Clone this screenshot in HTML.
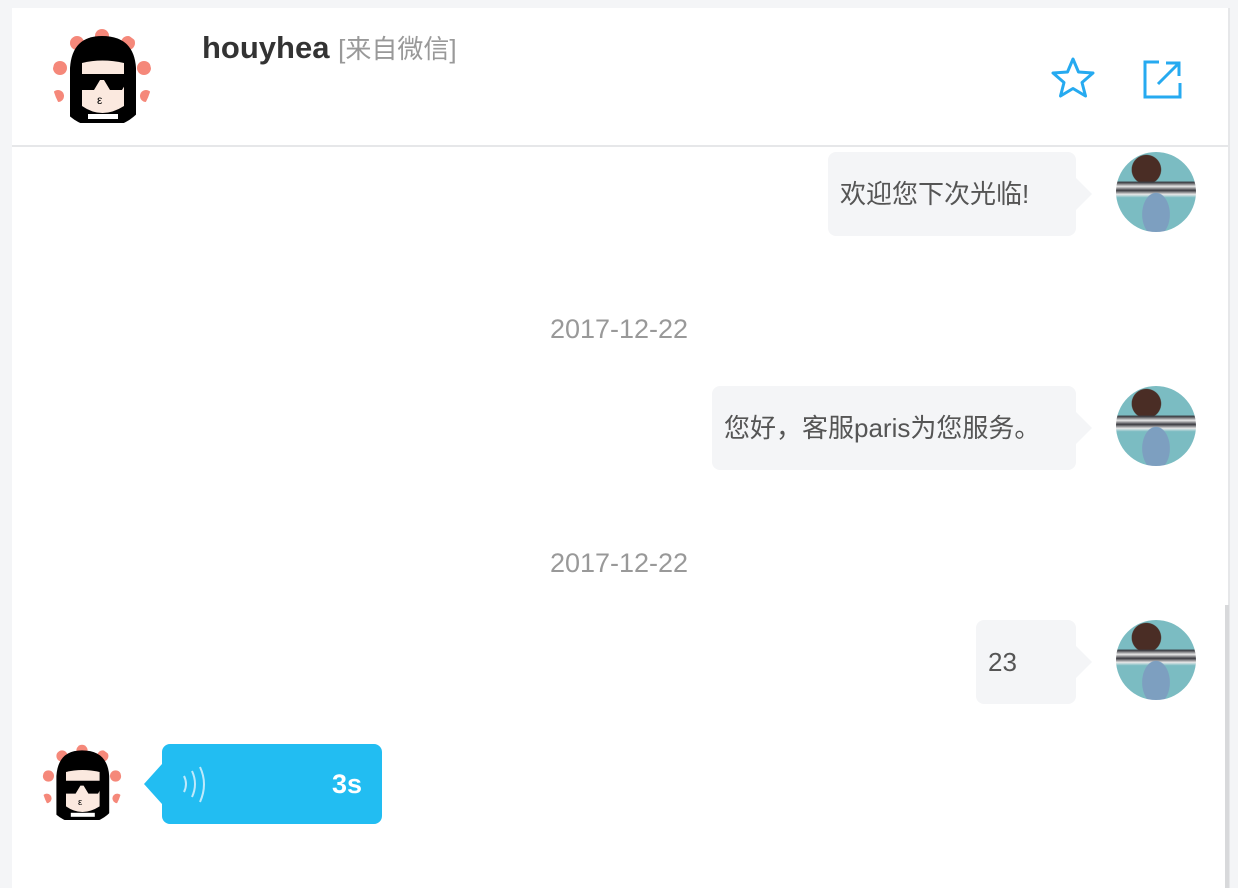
<!DOCTYPE html>
<html><head><meta charset="utf-8"><style>
*{margin:0;padding:0;box-sizing:border-box}
body{width:1238px;height:888px;background:#f4f5f7;position:relative;overflow:hidden;font-family:"Liberation Sans","Noto Sans CJK SC",sans-serif}
.panel{position:absolute;left:12px;top:8px;width:1218px;height:880px;background:#fff;border-right:2px solid #e6e7e9}
.hdr{position:absolute;left:12px;top:8px;width:1216px;height:139px;border-bottom:2px solid #e6e7e9}
.abs{position:absolute}
.bub{position:absolute;background:#f4f5f7;border-radius:8px;color:#555;font-size:26px;line-height:84px;padding:0 12px;height:84px}
.bub:after{content:"";position:absolute;right:-16px;top:26px;border:16px solid transparent;border-left-color:#f4f5f7;border-right:0}
.date{position:absolute;left:0;width:1238px;text-align:center;color:#999;font-size:27px}
.girl{position:absolute;width:80px;height:80px;border-radius:50%;background:radial-gradient(ellipse at 50% 78%,#7d9fc0 0 24%,transparent 25%),linear-gradient(180deg,transparent 36%,#3a3a40 38%,#e8e8e8 43%,#3a3a40 48%,#e8e8e8 53%,transparent 57%),radial-gradient(circle at 38% 22%,#4a2d25 0 18%,transparent 19%),#7bbcc2;overflow:hidden}
</style></head><body>
<div class="panel"></div>
<div class="hdr"></div>
<svg class="abs" style="left:52px;top:28px" width="100" height="100" viewBox="0 0 100 100">
<defs><clipPath id="c1"><circle cx="50" cy="50" r="50"/></clipPath></defs>
<g clip-path="url(#c1)"><circle cx="50" cy="50" r="50" fill="#fff"/>
<g fill="#f5887a"><circle cx="50" cy="8" r="7"/><circle cx="25" cy="15" r="7"/><circle cx="76" cy="15" r="7"/><circle cx="8" cy="40" r="7"/><circle cx="92" cy="40" r="7"/><circle cx="6" cy="68" r="6"/><circle cx="94" cy="68" r="6"/></g>
<path d="M18 95 L18 40 Q20 8 50 8 Q82 8 84 40 L84 95 Z" fill="#000"/>
<path d="M30 35 Q50 30 72 35 L72 78 Q50 92 30 78Z" fill="#fbe9df"/>
<path d="M26 46 H76 V52 L70 62 H58 L52 52 H48 L42 62 H30 L26 52Z" fill="#000"/>
<text x="45" y="76" font-size="12" fill="#000">ε</text>
<rect x="36" y="86" width="30" height="5" fill="#fff"/></g></svg>
<div class="abs" style="left:202px;top:29px;font-size:31px;font-weight:bold;color:#333">houyhea <span style="font-weight:normal;color:#999;font-size:26px">[来自微信]</span></div>
<svg class="abs" style="left:1049px;top:56px" width="48" height="44" viewBox="0 0 48 44"><path d="M24 3 L29.5 16 L44 17 L33 26.5 L36.5 40 L24 32.5 L11.5 40 L15 26.5 L4 17 L18.5 16 Z" fill="none" stroke="#26aaf0" stroke-width="3" stroke-linejoin="round"/></svg>
<svg class="abs" style="left:1142px;top:60px" width="40" height="40" viewBox="0 0 40 40"><path d="M17 2 H3 V37 H38 V23" fill="none" stroke="#26aaf0" stroke-width="3"/><path d="M16 24 L36 4 M24 3 H37 V16" fill="none" stroke="#26aaf0" stroke-width="3"/></svg>

<div class="bub" style="left:828px;top:152px;width:248px">欢迎您下次光临!</div>
<div class="girl" style="left:1116px;top:152px"></div>
<div class="date" style="top:314px">2017-12-22</div>
<div class="bub" style="left:712px;top:386px;width:364px">您好，客服paris为您服务。</div>
<div class="girl" style="left:1116px;top:386px"></div>
<div class="date" style="top:548px">2017-12-22</div>
<div class="bub" style="left:976px;top:620px;width:100px">23</div>
<div class="girl" style="left:1116px;top:620px"></div>

<svg class="abs" style="left:42px;top:744px" width="80" height="80" viewBox="0 0 100 100">
<defs><clipPath id="c2"><circle cx="50" cy="50" r="50"/></clipPath></defs>
<g clip-path="url(#c2)"><circle cx="50" cy="50" r="50" fill="#fff"/>
<g fill="#f5887a"><circle cx="50" cy="8" r="7"/><circle cx="25" cy="15" r="7"/><circle cx="76" cy="15" r="7"/><circle cx="8" cy="40" r="7"/><circle cx="92" cy="40" r="7"/><circle cx="6" cy="68" r="6"/><circle cx="94" cy="68" r="6"/></g>
<path d="M18 95 L18 40 Q20 8 50 8 Q82 8 84 40 L84 95 Z" fill="#000"/>
<path d="M30 35 Q50 30 72 35 L72 78 Q50 92 30 78Z" fill="#fbe9df"/>
<path d="M26 46 H76 V52 L70 62 H58 L52 52 H48 L42 62 H30 L26 52Z" fill="#000"/>
<text x="45" y="76" font-size="12" fill="#000">ε</text>
<rect x="36" y="86" width="30" height="5" fill="#fff"/></g></svg>
<div class="abs" style="left:162px;top:744px;width:220px;height:80px;background:#22bdf2;border-radius:8px"></div>
<div class="abs" style="left:144px;top:764px;border:20px solid transparent;border-right:18px solid #22bdf2;border-left:0"></div>
<svg class="abs" style="left:176px;top:762px" width="44" height="44" viewBox="0 0 44 44"><g fill="none" stroke="#bfe9fb" stroke-width="2"><path d="M8 14 Q12 22 8 30"/><path d="M16 9 Q22 22 16 35"/><path d="M24 5 Q32 22 24 40"/></g></svg>
<div class="abs" style="left:332px;top:769px;color:#fff;font-size:27px;font-weight:bold">3s</div>
<div class="abs" style="left:1225px;top:605px;width:4px;height:283px;background:#d8d9db"></div>
</body></html>
